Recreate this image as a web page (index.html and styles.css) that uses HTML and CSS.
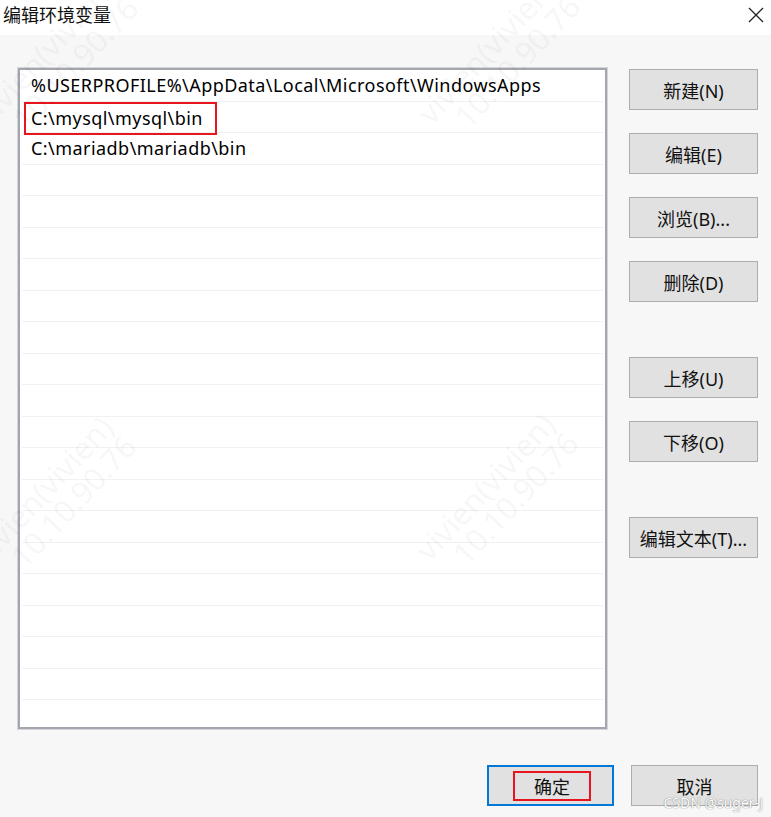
FILE: index.html
```html
<!DOCTYPE html>
<html lang="zh-CN">
<head>
<meta charset="utf-8">
<title>编辑环境变量</title>
<link rel="stylesheet" href="styles.css">
</head>
<body>
<div class="window">
  <div class="titlebar">
    <span class="title">编辑环境变量</span>
    <span class="close">
      <svg width="16" height="16" viewBox="0 0 16 16"><path d="M1 1 L15 15 M15 1 L1 15" stroke="#222" stroke-width="1.3" fill="none"/></svg>
    </span>
  </div>
  <div class="dialog">
    <div class="main">
      <div class="listbox">
        <div class="row">%USERPROFILE%\AppData\Local\Microsoft\WindowsApps</div>
        <div class="row"><span class="mark">C:\mysql\mysql\bin</span></div>
        <div class="row">C:\mariadb\mariadb\bin</div>
        <div class="row"></div><div class="row"></div><div class="row"></div><div class="row"></div>
        <div class="row"></div><div class="row"></div><div class="row"></div><div class="row"></div>
        <div class="row"></div><div class="row"></div><div class="row"></div><div class="row"></div>
        <div class="row"></div><div class="row"></div><div class="row"></div><div class="row"></div>
        <div class="row"></div><div class="row"></div>
      </div>
      <div class="side">
        <button class="btn">新建(N)</button>
        <button class="btn">编辑(E)</button>
        <button class="btn">浏览(B)...</button>
        <button class="btn">删除(D)</button>
        <button class="btn gap-big">上移(U)</button>
        <button class="btn">下移(O)</button>
        <button class="btn gap-big">编辑文本(T)...</button>
      </div>
    </div>
    <div class="footer">
      <button class="btn btn-default"><span class="mark-ok">确定</span></button>
      <button class="btn">取消</button>
    </div>
  </div>
  <div class="wm wm-a"><div>vivien(vivien)</div><div class="ip">10.10.90.76</div></div>
  <div class="wm wm-b"><div>vivien(vivien)</div><div class="ip">10.10.90.76</div></div>
  <div class="wm wm-c"><div>vivien(vivien)</div><div class="ip">10.10.90.76</div></div>
  <div class="wm wm-d"><div>vivien(vivien)</div><div class="ip">10.10.90.76</div></div>
  <div class="csdn">CSDN @suger-J</div>
</div>
</body>
</html>
```
FILE: styles.css
```css
* { box-sizing: border-box; }
html, body { margin: 0; padding: 0; }
body {
  width: 771px;
  height: 817px;
  overflow: hidden;
  font-family: "Noto Sans", "Noto Sans CJK SC", sans-serif;
  color: #000;
  background: #f7f7f7;
}
.window {
  position: relative;
  width: 771px;
  height: 817px;
  overflow: hidden;
}
.titlebar {
  height: 35px;
  background: #fff;
  display: flex;
  align-items: flex-start;
  justify-content: space-between;
  padding: 2px 7px 0 3px;
}
.title {
  font-family: "Noto Sans CJK SC", sans-serif;
  font-size: 18px;
  line-height: 24px;
  color: #111;
}
.close { padding-top: 4px; }
.dialog {
  height: 782px;
  background: #f7f7f7;
  padding: 33px 0 0 18px;
}
.main {
  display: flex;
  align-items: flex-start;
}
.listbox {
  width: 589px;
  height: 661px;
  background: #fff;
  border: 2px solid #a3a6ad;
  box-shadow: 0 0 0 1px #d4d6da;
  padding: 0 2px;
  overflow: hidden;
}
.row {
  height: 31.5px;
  border-bottom: 1px solid #f1f1f1;
  font-size: 18px;
  letter-spacing: 0.45px;
  line-height: 30px;
  padding-left: 9px;
  white-space: nowrap;
}
.mark {
  display: inline-block;
  margin-left: -7px;
  padding: 0 12px 0 5px;
  height: 33px;
  line-height: 29px;
  border: 2px solid #e8141e;
  position: relative;
  top: 0;
}
.side {
  margin-left: 22px;
  padding-top: 1px;
  display: flex;
  flex-direction: column;
  gap: 23px;
}
.btn {
  width: 129px;
  height: 41px;
  background: #e1e1e1;
  border: 1px solid #adadad;
  font-family: "Noto Sans", "Noto Sans CJK SC", sans-serif;
  font-size: 18px;
  color: #111;
  padding: 0;
  display: flex;
  align-items: center;
  justify-content: center;
}
.gap-big { margin-top: 32px; }
.footer {
  display: flex;
  gap: 17px;
  margin-top: 36px;
  padding-left: 469px;
}
.footer .btn { width: 127px; }
.btn-default {
  border: 2px solid #0078d7;
}
.mark-ok {
  display: flex;
  align-items: center;
  justify-content: center;
  width: 78px;
  height: 30px;
  border: 2px solid #e8141e;
  margin-left: 3px;
}
.wm {
  position: absolute;
  font-family: "Noto Sans", sans-serif;
  font-size: 31px;
  line-height: 30px;
  color: rgba(0, 0, 0, 0.055);
  transform: rotate(-47deg);
  transform-origin: 0 30px;
  pointer-events: none;
  white-space: nowrap;
}
.wm .ip { padding-left: 22px; }
.wm-a { left: -8px; top: 100px; }
.wm-b { left: 434px; top: 98px; }
.wm-c { left: -10px; top: 538px; }
.wm-d { left: 432px; top: 535px; }
.csdn {
  position: absolute;
  right: 8px;
  bottom: 5px;
  font-family: "Noto Sans", sans-serif;
  font-size: 14px;
  color: #fff;
  text-shadow: 0 0 1px #888, 0 0 1px #888;
  pointer-events: none;
}
```
